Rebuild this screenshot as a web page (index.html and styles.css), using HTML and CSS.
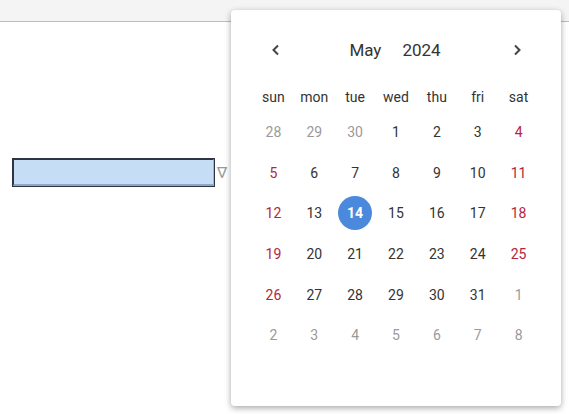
FILE: index.html
```html
<!DOCTYPE html>
<html lang="en">
<head>
  <meta charset="UTF-8" />
  <title>Date picker</title>
  <link rel="stylesheet" href="styles.css">
</head>
<body>
  <!-- Top bar -->
  <div class="topbar"></div>

  <!-- Field -->
  <div class="field">
    <div class="date-input"></div>
    <span class="drop">&#8711;</span>
  </div>

  <!-- Calendar popup -->
  <div class="calendar">
    <div class="cal-head">
      <button class="nav-btn prev" aria-label="previous">
        <svg width="10" height="12" viewBox="0 0 10 12"><path d="M7 1.5 L2.5 6 L7 10.5" fill="none" stroke="#444" stroke-width="2"/></svg>
      </button>
      <div class="cal-title"><span>May</span><span>2024</span></div>
      <button class="nav-btn next" aria-label="next">
        <svg width="10" height="12" viewBox="0 0 10 12"><path d="M3 1.5 L7.5 6 L3 10.5" fill="none" stroke="#444" stroke-width="2"/></svg>
      </button>
    </div>

    <div class="weekdays">
      <span>sun</span><span>mon</span><span>tue</span><span>wed</span><span>thu</span><span>fri</span><span>sat</span>
    </div>

    <div class="days">
      <span class="other">28</span><span class="other">29</span><span class="other">30</span><span>1</span><span>2</span><span>3</span><span class="weekend">4</span>
      <span class="weekend">5</span><span>6</span><span>7</span><span>8</span><span>9</span><span>10</span><span class="weekend">11</span>
      <span class="weekend">12</span><span>13</span><span class="selected"><b>14</b></span><span>15</span><span>16</span><span>17</span><span class="weekend">18</span>
      <span class="weekend">19</span><span>20</span><span>21</span><span>22</span><span>23</span><span>24</span><span class="weekend">25</span>
      <span class="weekend">26</span><span>27</span><span>28</span><span>29</span><span>30</span><span>31</span><span class="other">1</span>
      <span class="other">2</span><span class="other">3</span><span class="other">4</span><span class="other">5</span><span class="other">6</span><span class="other">7</span><span class="other">8</span>
    </div>
  </div>
</body>
</html>
```

FILE: styles.css
```css
:root {
  --text-color: #333;
  --muted: #9a9a9a;
  --weekend: #b3263d;
  --accent: #4a89dc;
}

body {
  margin: 0;
  font-family: Roboto, 'Liberation Sans', sans-serif;
  background: #fff;
  color: var(--text-color);
  height: 414px;
  overflow: hidden;
}

.topbar {
  height: 21px;
  background: #f4f4f4;
  border-bottom: 1px solid #bdbdbd;
}

.field {
  display: flex;
  align-items: center;
  gap: 3px;
  margin: 137px 0 0 13px;
}

.date-input {
  width: 199px;
  height: 24px;
  background: #c5ddf5;
  border: 1px solid #2e3440;
  border-right-color: #9cb4d0;
  border-bottom: 2px solid #8aa8cc;
  outline: 1px solid #2e3440;
}

.drop {
  color: #999;
  font-size: 15px;
  font-family: 'DejaVu Sans', sans-serif;
}

.calendar {
  position: absolute;
  left: 231px;
  top: 10px;
  width: 286px;
  height: 396px;
  padding: 0 22px;
  background: #fff;
  border-radius: 4px;
  box-shadow: 0 2px 6px rgba(0, 0, 0, 0.35);
}

.cal-head {
  display: grid;
  grid-template-columns: repeat(7, 1fr);
  align-items: center;
  height: 40px;
  margin-top: 20px;
}

.nav-btn {
  background: none;
  border: none;
  padding: 0;
  display: flex;
  justify-content: center;
  cursor: pointer;
}

.nav-btn.prev {
  padding-left: 5px;
}

.nav-btn.next {
  grid-column: 7;
  padding-right: 3px;
}

.cal-title {
  grid-column: 2 / 7;
  display: flex;
  justify-content: center;
  gap: 21px;
  font-size: 17px;
  padding-right: 2px;
}

.weekdays {
  display: grid;
  grid-template-columns: repeat(7, 1fr);
  height: 28px;
  margin-top: 13px;
  align-items: center;
  text-align: center;
  font-size: 14px;
}

.days {
  display: grid;
  grid-template-columns: repeat(7, 1fr);
  grid-auto-rows: 40.6px;
  margin-top: 1px;
  text-align: center;
  font-size: 14px;
}

.days span {
  display: flex;
  align-items: center;
  justify-content: center;
}

.days .other {
  color: var(--muted);
}

.days .weekend {
  color: var(--weekend);
}

.days .selected b {
  width: 34px;
  height: 34px;
  border-radius: 50%;
  background: var(--accent);
  color: #fff;
  display: flex;
  align-items: center;
  justify-content: center;
}
```
